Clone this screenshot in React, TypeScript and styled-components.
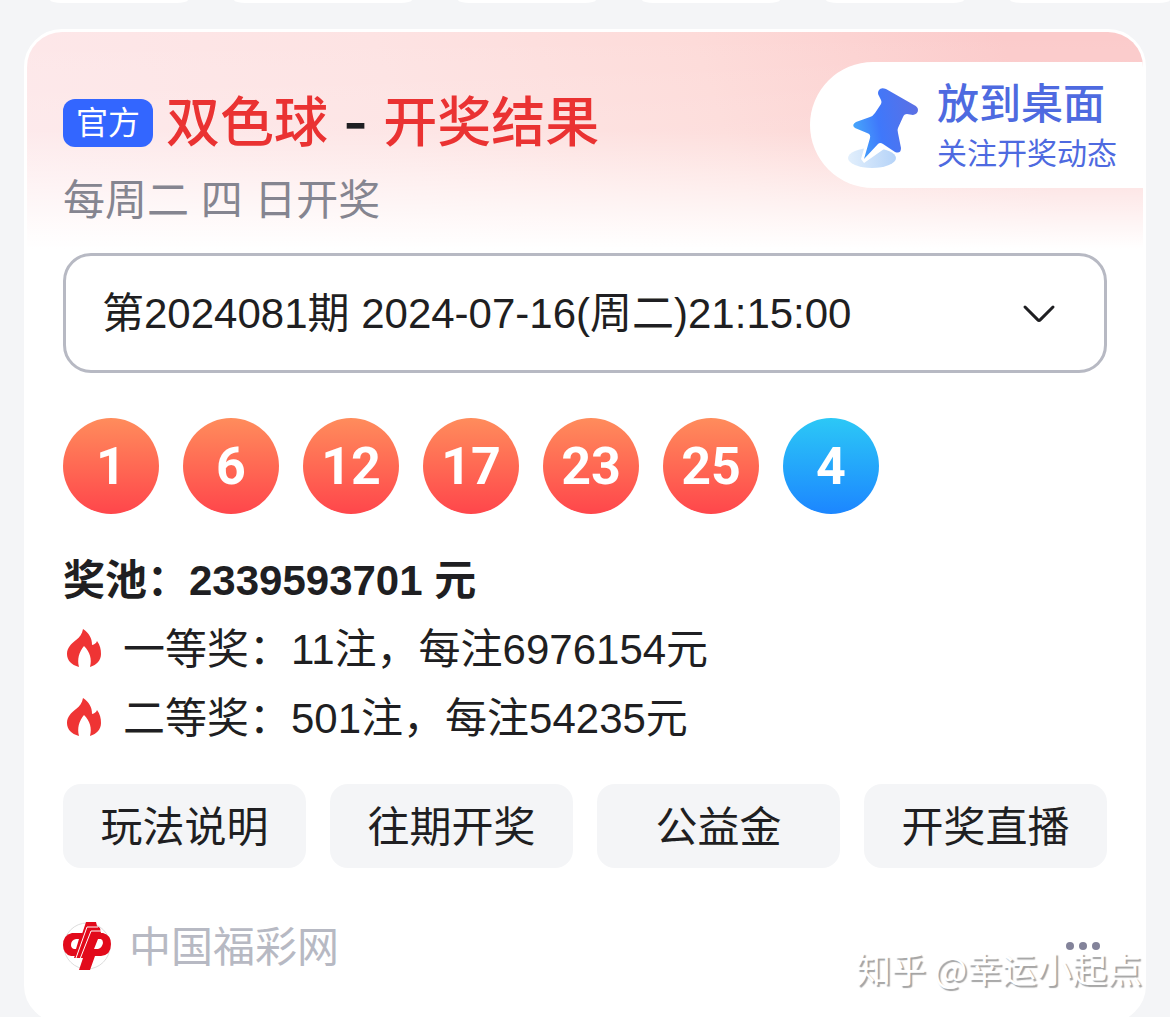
import React, { useState } from "react";
import styled, { createGlobalStyle } from "styled-components";

const GlobalStyle = createGlobalStyle`
  *, *::before, *::after { box-sizing: border-box; }
  body {
    margin: 0;
    background: #f4f5f7;
    color: #1f1f22;
    font-family: "Liberation Sans", "Noto Sans CJK SC", sans-serif;
    font-size: 42px;
  }
  button, select { font: inherit; color: inherit; }
`;

const Page = styled.main`
  position: relative;
  height: 100vh;
  overflow: hidden;
`;

const ChipStrip = styled.div`
  display: flex;
  gap: 46px;
  height: 3px;
  padding-left: 50px;
`;

const Chip = styled.span<{ $wide?: boolean; $fill?: boolean }>`
  flex: ${(p) => (p.$fill ? "1 0 0" : `0 0 ${p.$wide ? 178 : 138}px`)};
  background: #fff;
  border-radius: 0 0 12px 12px / 0 0 3px 3px;
`;

const Card = styled.section`
  margin: 26px 24px 0;
  padding-bottom: 44px;
  border: 3px solid #fff;
  border-radius: 38px;
  overflow: hidden;
  background: #fff;
`;

const Header = styled.header`
  display: flex;
  justify-content: space-between;
  align-items: flex-start;
  height: 221px;
  padding: 30px 0 0 36px;
  background:
    linear-gradient(180deg, rgba(255, 255, 255, 0) 0%, rgba(255, 255, 255, 0.1) 45%, #fff 98%),
    linear-gradient(72deg, #fde8ea 0%, #fde3e3 35%, #fddbd9 62%, #fbcbcb 88%);
`;

const Heading = styled.div`
  padding-top: 29px;
`;

const TitleRow = styled.div`
  display: flex;
  align-items: center;
  gap: 13px;
  height: 64px;
`;

const Badge = styled.span`
  padding: 0 13px;
  border-radius: 12px;
  background: #3366ff;
  color: #fff;
  font-size: 32px;
  line-height: 48px;
`;

const Title = styled.h1`
  margin: 0;
  color: #ea3232;
  font-size: 54px;
  font-weight: 500;
  line-height: 64px;
  white-space: nowrap;
`;

const Dash = styled.span`
  padding: 0 15px;
  color: #1f1f22;
  font-family: Inter, sans-serif;
  font-weight: 600;
`;

const Schedule = styled.p`
  margin: 16px 0 0;
  color: #858590;
  line-height: 60px;
`;

const Promo = styled.button`
  display: flex;
  align-items: center;
  gap: 17px;
  height: 126px;
  padding: 0 26px 0 36px;
  border: 0;
  border-radius: 63px 0 0 63px;
  background: #fff;
  color: #4e6ae0;
  text-align: left;
`;

const PromoText = styled.span`
  display: flex;
  flex-direction: column;
  padding-top: 4px;
`;

const PromoTitle = styled.span`
  font-weight: 500;
  line-height: 54px;
`;

const PromoNote = styled.span`
  font-size: 30px;
  line-height: 44px;
`;

const Body = styled.div`
  padding: 0 36px;
`;

const SelectBox = styled.div`
  display: grid;
  align-items: center;
  & > * { grid-area: 1 / 1; }
  & > svg { justify-self: end; margin-right: 50px; pointer-events: none; }
`;

const Select = styled.select`
  appearance: none;
  width: 100%;
  height: 120px;
  padding: 0 100px 0 36px;
  border: 3px solid #b7b9c3;
  border-radius: 28px;
  background: #fff;
`;

const Balls = styled.ol`
  display: flex;
  gap: 24px;
  margin: 45px 0 0;
  padding: 0;
  list-style: none;
`;

const Ball = styled.li<{ $blue?: boolean }>`
  width: 96px;
  height: 96px;
  border-radius: 50%;
  background: ${(p) =>
    p.$blue
      ? "linear-gradient(180deg, #2cc8f6, #1c86ff)"
      : "linear-gradient(180deg, #ff8c5c, #ff464b)"};
  color: #fff;
  font-family: Roboto, sans-serif;
  font-size: 52px;
  font-weight: 700;
  line-height: 98px;
  text-align: center;
`;

const Prizes = styled.ul`
  margin: 32px 0 0;
  padding: 0;
  list-style: none;
  line-height: 69px;
`;

const Pool = styled.li`
  font-weight: 700;
`;

const Prize = styled.li`
  display: flex;
  align-items: center;
  gap: 18px;
`;

const Actions = styled.div`
  display: grid;
  grid-template-columns: repeat(4, 1fr);
  gap: 24px;
  margin-top: 31px;
`;

const Action = styled.button`
  height: 84px;
  padding: 0 0 6px;
  border: 0;
  border-radius: 18px;
  background: #f4f5f7;
`;

const Footer = styled.footer`
  display: flex;
  align-items: center;
  justify-content: space-between;
  height: 60px;
  margin-top: 48px;
`;

const Source = styled.a`
  display: flex;
  align-items: center;
  gap: 18px;
  color: #b7b9c3;
  text-decoration: none;
`;

const SourceName = styled.span`
  padding-bottom: 6px;
`;

const More = styled.button`
  display: flex;
  gap: 5px;
  padding: 12px 7px;
  border: 0;
  background: none;
`;

const Dot = styled.span`
  width: 8px;
  height: 8px;
  border-radius: 50%;
  background: #83839a;
`;

const Watermark = styled.span`
  position: absolute;
  right: 28px;
  bottom: 24px;
  color: #fff;
  font-family: "Noto Sans CJK SC", sans-serif;
  font-size: 35px;
  line-height: 50px;
  text-shadow: 2px 2px 1px #a4a4a4;
  pointer-events: none;
`;

const PinIcon = () => (
  <svg width="74" height="86" viewBox="-1 -1 74 86" aria-hidden="true">
    <defs>
      <linearGradient id="pin" x1="0" y1="0.6" x2="1" y2="0.4">
        <stop offset="0" stopColor="#47a8fb" />
        <stop offset="0.4" stopColor="#3f78fb" />
        <stop offset="1" stopColor="#5b70e4" />
      </linearGradient>
      <linearGradient id="pinShade" x1="0" y1="0" x2="1" y2="0">
        <stop offset="0" stopColor="#e2effc" />
        <stop offset="1" stopColor="#b5d3f8" />
      </linearGradient>
    </defs>
    <ellipse cx="25" cy="75" rx="24" ry="10" fill="url(#pinShade)" />
    <path d="M14 76L18 62L33 58L47 69Q43 67 37 66L17 80Z" fill="#fff" />
    <path
      d="M39 6Q34 4 32 7Q30 10 32 13L34 17Q35 19 34 21L28 30Q26 33 23 34L9 39Q4 42 8 45L20 50Q24 51 23 55L17 76L31 61Q33 59 36 61L48 69Q54 71 54 65L51 50Q50 47 51 45L56 34Q57 31 60 31L66 32Q71 31 71 27Q71 24 67 22Z"
      fill="url(#pin)"
    />
  </svg>
);

const ChevronIcon = () => (
  <svg width="36" height="24" viewBox="0 0 36 24" fill="none" aria-hidden="true">
    <path d="M4 6L16.600 18.600Q18 20 19.400 18.600L32 6" stroke="#1f1f22" strokeWidth="3" strokeLinecap="round" />
  </svg>
);

const FlameIcon = () => (
  <svg width="42" height="42" viewBox="0 0 42 42" aria-hidden="true">
    <path
      d="M20 0C26 4 29 9 29 16Q33 15 34 12C37 16 38 20 38 25C38 31 34 36 27 38C29 30 27 23 21 17C16 23 14 30 16 38C8 36 4 31 4 25C4 19 8 15 13 11C17 8 19 5 20 0Z"
      fill="#ef3434"
    />
  </svg>
);

const LotteryLogo = () => (
  <svg width="48" height="50" viewBox="0 0 48 50" aria-hidden="true">
    <circle cx="24" cy="25" r="23" fill="#fff" stroke="#ddd" />
    <path d="M20 12H9Q0 14 0 24Q0 33 8 35H14Z" fill="#e20a1b" />
    <path d="M16 18H13Q8 19 8 24Q8 27 11 28H13Z" fill="#fff" />
    <path
      d="M23 1H33L34 5L37 7L38 12H40Q48 14 48 23Q48 34 38 35H32L27 49H16L20 37H11Z"
      fill="#e20a1b"
    />
    <path d="M35 18H38Q40 19 40 22Q39 27 35 28H31Z" fill="#fff" />
    <path d="M13 37L24 6H35M17 38L28 10H38" fill="none" stroke="#fff" />
  </svg>
);

const draws = [
  "第2024081期 2024-07-16(周二)21:15:00",
];
const reds = [1, 6, 12, 17, 23, 25];
const blue = 4;
const prizes = ["一等奖：11注，每注6976154元", "二等奖：501注，每注54235元"];
const actions = ["玩法说明", "往期开奖", "公益金", "开奖直播"];

export default function App() {
  const [draw, setDraw] = useState(draws[0]);
  return (
    <>
      <GlobalStyle />
      <Page lang="zh-CN">
        <ChipStrip>
          <Chip />
          <Chip $wide />
          <Chip />
          <Chip />
          <Chip />
          <Chip $fill />
        </ChipStrip>
        <Card>
          <Header>
            <Heading>
              <TitleRow>
                <Badge>官方</Badge>
                <Title>
                  双色球<Dash>-</Dash>开奖结果
                </Title>
              </TitleRow>
              <Schedule>每周二 四 日开奖</Schedule>
            </Heading>
            <Promo type="button">
              <PinIcon />
              <PromoText>
                <PromoTitle>放到桌面</PromoTitle>
                <PromoNote>关注开奖动态</PromoNote>
              </PromoText>
            </Promo>
          </Header>
          <Body>
            <SelectBox>
              <Select aria-label="期号" value={draw} onChange={(e) => setDraw(e.target.value)}>
                {draws.map((d) => (
                  <option key={d}>{d}</option>
                ))}
              </Select>
              <ChevronIcon />
            </SelectBox>
            <Balls>
              {reds.map((n) => (
                <Ball key={n}>{n}</Ball>
              ))}
              <Ball $blue>{blue}</Ball>
            </Balls>
            <Prizes>
              <Pool>奖池：2339593701 元</Pool>
              {prizes.map((p) => (
                <Prize key={p}>
                  <FlameIcon />
                  {p}
                </Prize>
              ))}
            </Prizes>
            <Actions>
              {actions.map((a) => (
                <Action key={a} type="button">
                  {a}
                </Action>
              ))}
            </Actions>
            <Footer>
              <Source href="#source">
                <LotteryLogo />
                <SourceName>中国福彩网</SourceName>
              </Source>
              <More type="button" aria-label="更多">
                <Dot />
                <Dot />
                <Dot />
              </More>
            </Footer>
          </Body>
        </Card>
        <Watermark>知乎 @幸运小起点</Watermark>
      </Page>
    </>
  );
}
